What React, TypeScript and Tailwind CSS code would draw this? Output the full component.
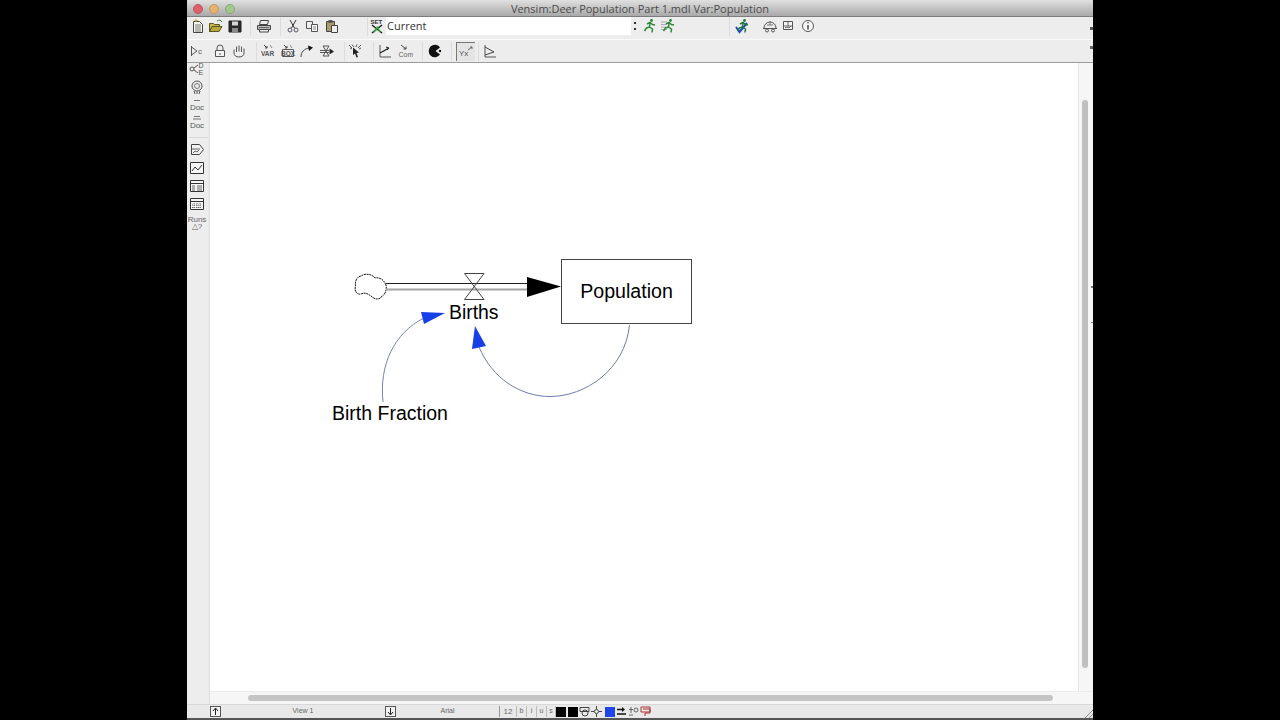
import type { ReactNode } from "react";

function Ic({ children, className = "" }: { children: ReactNode; className?: string }) {
  return (
    <svg viewBox="0 0 16 16" className={`w-4 h-4 shrink-0 ${className}`} fill="none" stroke="#444" strokeWidth="1">
      {children}
    </svg>
  );
}

function Sep({ className = "" }: { className?: string }) {
  return <div className={`w-px h-[19px] bg-[#dcdcdc] shrink-0 ${className}`} />;
}

const NewDoc = ({ className }: { className?: string }) => (
  <Ic className={className}>
    <path d="M3.500 3.500h6l3 3v8h-9z" fill="#f7f7f0" />
    <path d="M5 7h6M5 9h6M5 11h6M5 13h6" stroke="#777" />
    <path d="M6 1v3M4.500 2.500h3" stroke="#b9a93a" />
  </Ic>
);
const OpenDoc = ({ className }: { className?: string }) => (
  <Ic className={className}>
    <path d="M1.500 5.500h4l1 1h5v2h-7l-3 5z" fill="#c9b64a" stroke="#5b5720" />
    <path d="M1.500 13.500l2.500-5h10l-3 5z" fill="#b8a63e" stroke="#5b5720" />
    <path d="M9 3c2-1.500 4-1 5 1" stroke="#3f7f3f" />
  </Ic>
);
const Save = ({ className }: { className?: string }) => (
  <Ic className={className}>
    <path d="M2 3h12v11H2z" fill="#2b2b2b" stroke="#222" />
    <path d="M5 3.500h6v4H5z" fill="#d6d6d6" stroke="none" />
    <path d="M5 10h6v4H5z" fill="#8a8a8a" stroke="none" />
  </Ic>
);
const Printer = ({ className }: { className?: string }) => (
  <Ic className={className}>
    <path d="M4.500 2.500h8l-1 4h-8z" fill="#eee" />
    <path d="M1.500 7.500h13v4h-13z" fill="#bbb" />
    <path d="M3.500 11.500h9v2.500h-9z" fill="#eee" />
    <path d="M3 9.500h10" stroke="#666" />
  </Ic>
);
const Scissors = ({ className }: { className?: string }) => (
  <Ic className={className}>
    <path d="M5 2l4.500 8M11 2l-4.500 8" stroke="#333" />
    <circle cx="5" cy="12" r="2" stroke="#556" />
    <circle cx="11" cy="12" r="2" stroke="#556" />
  </Ic>
);
const Copy = ({ className }: { className?: string }) => (
  <Ic className={className}>
    <path d="M2.500 3.500h6v7h-6z" fill="#eee" stroke="#555" />
    <path d="M7.500 6.500h6v7h-6z" fill="#f6f6f6" stroke="#555" />
    <path d="M9 9h3M9 11h3" stroke="#888" />
  </Ic>
);
const Paste = ({ className }: { className?: string }) => (
  <Ic className={className}>
    <path d="M2.500 3.500h8v10h-8z" fill="#a99b6c" stroke="#444" />
    <path d="M4.500 2h4v3h-4z" fill="#555" stroke="none" />
    <path d="M7.500 7.500h6v7h-6z" fill="#eee" stroke="#444" />
  </Ic>
);
const SetIcon = ({ className }: { className?: string }) => (
  <Ic className={className}>
    <text x="1.500" y="6" fontSize="6" fontWeight="700" fontFamily="Liberation Sans" fill="#333" stroke="none">SET</text>
    <path d="M3 7l10 8M13 7L3 15" stroke="#1f1f1f" strokeWidth="1.500" />
    <path d="M8 8.500l3 5.500M5 14l3-4" stroke="#2faa3f" strokeWidth="1.500" />
  </Ic>
);
const Runner = ({ className, color = "#2c8a35", check = false, lines = false }: { className?: string; color?: string; check?: boolean; lines?: boolean }) => (
  <Ic className={className}>
    {lines && <path d="M1 4h6M1 6.500h5M1 9h5M1 11.500h6" stroke="#aaa" />}
    {check && <path d="M2 9l3.500 5L13 5" stroke="#2446c9" strokeWidth="2" />}
    <circle cx="10.500" cy="2.500" r="1.400" fill={color} stroke="none" />
    <path d="M6 6l3-1.500 2.500 2 2.500.5M9 5l-.5 4-3 1-2 3M8.500 9l3 2-.500 3.500" stroke={color} strokeWidth="1.500" />
  </Ic>
);
const Sketch = ({ className }: { className?: string }) => (
  <Ic className={className}>
    <path d="M2 10a6 6 0 0 1 12 0M1 10.500h14" stroke="#555" />
    <path d="M5 7h6M8 3v4" stroke="#777" />
    <circle cx="5" cy="12.500" r="1.500" stroke="#555" />
    <circle cx="11" cy="12.500" r="1.500" stroke="#555" />
  </Ic>
);
const Chart = ({ className }: { className?: string }) => (
  <Ic className={className}>
    <path d="M3.500 3.500h9v8h-9z" fill="#f4f4f4" stroke="#555" />
    <path d="M4 8h8M8 4v4M5 10l2-1 2 1 2-2" stroke="#666" />
  </Ic>
);
const Info = ({ className }: { className?: string }) => (
  <Ic className={className}>
    <circle cx="8" cy="8" r="5.500" fill="#f8f8f8" stroke="#555" />
    <path d="M8 7v4.500" stroke="#444" strokeWidth="1.500" />
    <circle cx="8" cy="4.800" r=".8" fill="#444" stroke="none" />
  </Ic>
);
const FlagC = ({ className }: { className?: string }) => (
  <Ic className={className}>
    <path d="M2.500 3v10M2.500 4L8 8l-5.500 4" stroke="#555" />
    <text x="9" y="11" fontSize="8" fontFamily="Liberation Sans" fill="#555" stroke="none">c</text>
  </Ic>
);
const CauseDE = ({ className }: { className?: string }) => (
  <Ic className={className}>
    <circle cx="3" cy="8" r="2" stroke="#555" />
    <path d="M5 7l4-3M5 9l4 3" stroke="#555" />
    <text x="9.500" y="6.500" fontSize="7" fontFamily="Liberation Sans" fill="#555" stroke="none">D</text>
    <text x="9.500" y="14" fontSize="7" fontFamily="Liberation Sans" fill="#555" stroke="none">E</text>
  </Ic>
);
const Lock = ({ className }: { className?: string }) => (
  <Ic className={className}>
    <path d="M5 7V5a3 3 0 0 1 6 0v2" stroke="#555" />
    <path d="M3.500 7.500h9v6h-9z" fill="#f4f4f4" stroke="#555" />
    <path d="M8 10v2" stroke="#555" />
  </Ic>
);
const Hand = ({ className }: { className?: string }) => (
  <Ic className={className}>
    <path d="M3 6.500V10c0 2.500 2 4 5 4s5-1.500 5-4V5.500M5.500 9V3.500M8 8.500V2.500M10.500 9V3.500" stroke="#555" />
  </Ic>
);
const VarIcon = ({ className, box = false }: { className?: string; box?: boolean }) => (
  <Ic className={className}>
    {box && <path d="M2.500 6.500h11v7h-11z" stroke="#555" />}
    <path d="M4 2l3 3M7 5V3M7 5H5" stroke="#444" />
    <path d="M10 2l2 3" stroke="#888" />
    <text x="1" y="13" fontSize="6.500" fontWeight="700" fontFamily="Liberation Sans" fill="#555" stroke="none">{box ? "BOX" : "VAR"}</text>
  </Ic>
);
const CurveArrow = ({ className }: { className?: string }) => (
  <Ic className={className}>
    <path d="M2 14C2 9 5 6 10 5" stroke="#444" />
    <path d="M9 2.500l5 2-4 3.500z" fill="#111" stroke="none" />
  </Ic>
);
const Valve = ({ className }: { className?: string }) => (
  <Ic className={className}>
    <path d="M4 3h6l-6 10h6zM1 7.500h9M1 9.500h9" stroke="#555" />
    <path d="M10.500 5.500l4.500 3-4.500 3z" fill="#222" stroke="none" />
  </Ic>
);
const Antenna = ({ className }: { className?: string }) => (
  <Ic className={className}>
    <path d="M1 2l3 3M4 1.500L6 4M9 1.500L8 4M13 2l-3 3M2 5l2 1M13 5l-2 1" stroke="#555" />
    <path d="M5 4.500l6 5-2.500.5 1.500 4-1.500.5-1.500-4-2 1.500z" fill="#222" stroke="none" />
  </Ic>
);
const Graph = ({ className }: { className?: string }) => (
  <Ic className={className}>
    <path d="M3 2v12h11" stroke="#555" />
    <path d="M3 10l9-5" stroke="#222" strokeWidth="1.300" />
    <path d="M9 4l3 1-2 2" stroke="#222" />
  </Ic>
);
const ComIcon = ({ className }: { className?: string }) => (
  <Ic className={className}>
    <path d="M4 2l5 4M9 6V3.500M9 6H6.500" stroke="#444" />
    <text x="1.500" y="14" fontSize="7" fontFamily="Liberation Sans" fill="#666" stroke="none">Com</text>
  </Ic>
);
const Pacman = ({ className }: { className?: string }) => (
  <Ic className={className}>
    <path d="M14 4.500A6.200 6.200 0 1 0 14 11.500L9.500 8z" fill="#111" stroke="none" />
    <circle cx="14" cy="8" r="1.200" fill="#111" stroke="none" />
  </Ic>
);
const YxIcon = () => (
  <Ic>
    <text x="1" y="12" fontSize="8" fontFamily="Liberation Sans" fill="#555" stroke="none">Yx</text>
    <path d="M10 6l4-3M12 3h2v2" stroke="#666" />
  </Ic>
);
const TriGraph = ({ className }: { className?: string }) => (
  <Ic className={className}>
    <path d="M3 2v12h11" stroke="#555" />
    <path d="M3 4l9 5-9 3" stroke="#444" />
  </Ic>
);
const TinyDoc = ({ className, mark }: { className?: string; mark: string }) => (
  <div className={`w-4 h-4 shrink-0 flex flex-col items-center justify-end text-[8px] leading-[9px] text-[#555] ${className ?? ""}`}>
    <svg viewBox="0 0 16 6" className="w-4 h-[6px]" stroke="#777" fill="none">
      <path d={mark} />
    </svg>
    <span>Doc</span>
  </div>
);
const ViewerBox = ({ className }: { className?: string }) => (
  <Ic className={className}>
    <path d="M2.500 2.500h8l4 5-4 5h-8z" fill="#f2f2f2" stroke="#444" />
    <path d="M3 7h8M4 11l2-2 2 1 2-2" stroke="#666" />
  </Ic>
);
const LineGraph = ({ className }: { className?: string }) => (
  <Ic className={className}>
    <path d="M1.500 2.500h13v11h-13z" fill="#f6f6f6" stroke="#333" />
    <path d="M3 11l3-4 3 3 4-5" stroke="#333" />
  </Ic>
);
const TableIcon = ({ className, dense = false }: { className?: string; dense?: boolean }) => (
  <Ic className={className}>
    <path d="M1.500 2.500h13v11h-13z" fill="#f6f6f6" stroke="#333" />
    <path d="M2 5.500h12" stroke="#333" />
    <path d={dense ? "M5 7v6M8 7v6M11 7v6M3 9h10M3 11.500h10" : "M3 8h3M8 8h5M3 10h3M8 10h5M3 12h3M8 12h5"} stroke="#666" strokeDasharray={dense ? "1 1" : undefined} />
  </Ic>
);
const StatusBtn = ({ down = false }: { down?: boolean }) => (
  <div className="w-[11px] h-[11px] border border-[#555] bg-[#f2f2f2] flex items-center justify-center shrink-0">
    <svg viewBox="0 0 9 9" className="w-[9px] h-[9px]" stroke="#222" fill="none">
      <path d={down ? "M4.500 1v6M2 5l2.500 3L7 5" : "M4.500 8V2M2 4l2.500-3L7 4"} />
    </svg>
  </div>
);
const MiniIcon = ({ children }: { children: ReactNode }) => (
  <svg viewBox="0 0 11 11" className="w-[11px] h-[11px] shrink-0" fill="none" stroke="#444">
    {children}
  </svg>
);

function Diagram() {
  return (
    <div className="relative flex-1 bg-white overflow-hidden">
      <svg viewBox="210 63 868 630" className="absolute left-0 top-0 w-[868px] h-[630px]" fill="none">
        <path
          d="M386 285C384 280 380 277 375 278C372 274 365 273 361 276C356 277 355 282 355.500 286C354 291 357 295 361 294C365 292 368 294 371 296C375 300 380 300 382 296C385 295 387 290 386 285Z"
          stroke="#111"
          strokeWidth="1"
          strokeDasharray="2 .7"
        />
        <path d="M386 283.500H527" stroke="#222" strokeWidth="1.200" />
        <path d="M386 289.500H527" stroke="#a4a4a4" strokeWidth="2" />
        <path d="M527 277L561 286.500L527 297Z" fill="#000" />
        <path d="M464.500 273.500H484L464.500 299.500H484Z" stroke="#444" strokeWidth="1" />
        <path d="M383 402C379 365 394 333 424 318" stroke="#7482ad" strokeWidth="1" />
        <path d="M421 312L445 313L424 324Z" fill="#1740e6" />
        <path d="M629.500 325C625 370 585 396.500 550 396.500C520 396.500 492 378 479 347" stroke="#6f7dab" strokeWidth="1" />
        <path d="M475 326L486 346L472 349Z" fill="#1740e6" />
      </svg>
      {/* population stock */}
      <div className="absolute left-[351px] top-[196px] w-[131px] h-[65px] border border-[#444] bg-white flex items-center justify-center text-[19.6px] text-black">
        Population
      </div>
      <span className="absolute left-[239px] top-[237px] text-[19.4px] leading-6 text-black">Births</span>
      <span className="absolute left-[122px] top-[338px] text-[19.5px] leading-6 text-black">Birth Fraction</span>
    </div>
  );
}

export default function App() {
  return (
    <div className="h-screen bg-black flex justify-center overflow-hidden font-['Liberation_Sans',sans-serif]">
      <div className="w-[906px] h-[720px] flex flex-col bg-[#ededed] relative">
        {/* title bar */}
        <div className="h-[17px] shrink-0 relative flex items-center justify-center bg-gradient-to-b from-[#e0e0e0] to-[#a9a9a9] border-b border-[#7c7c7c]">
          <div className="absolute left-[6px] top-[4px] flex gap-[6px]">
            <div className="w-[10px] h-[10px] rounded-full bg-[#df5f66] border border-[#b9585c]" />
            <div className="w-[10px] h-[10px] rounded-full bg-[#e6b36e] border border-[#c2995f]" />
            <div className="w-[10px] h-[10px] rounded-full bg-[#a3c78c] border border-[#86a875]" />
          </div>
          <span className="font-['Open_Sans',sans-serif] text-[11px] leading-none text-[#4a4a4a]">
            Vensim:Deer Population Part 1.mdl Var:Population
          </span>
        </div>

        {/* main toolbar */}
        <div className="h-[23px] shrink-0 flex items-center pl-[3px] pb-[4px] border-b border-[#fafafa] bg-[#ededed]">
          <NewDoc />
          <OpenDoc className="ml-[2px]" />
          <Save className="ml-[3px]" />
          <Sep className="ml-[7px]" />
          <Printer className="ml-[5px]" />
          <Sep className="ml-[8px]" />
          <Scissors className="ml-[4px]" />
          <Copy className="ml-[3px]" />
          <Paste className="ml-[4px]" />
          <Sep className="ml-[27px]" />
          <SetIcon className="ml-[1px]" />
          <div className="ml-[1px] w-[245px] h-[18px] bg-white flex items-center pl-[1px] text-[11px] font-['Open_Sans',sans-serif] text-[#333] shrink-0">
            Current
          </div>
          <div className="ml-[3px] w-[2px] h-[8px] border-y-2 border-[#333] shrink-0" />
          <Runner className="ml-[5px]" />
          <Runner className="ml-[3px]" lines />
          <Sep className="ml-[53px]" />
          <Runner className="ml-[4px]" color="#1f7a3a" check />
          <Sketch className="ml-[12px]" />
          <Chart className="ml-[2px]" />
          <Info className="ml-[4px]" />
        </div>

        {/* sketch toolbar */}
        <div className="h-[23px] shrink-0 flex items-center pl-[2px] border-b border-[#9c9c9c] bg-[#ededed]">
          <FlagC />
          <Lock className="ml-[7px]" />
          <Hand className="ml-[3px]" />
          <Sep className="ml-[9px]" />
          <VarIcon className="ml-[3px]" />
          <VarIcon className="ml-[4px]" box />
          <CurveArrow className="ml-[3px]" />
          <Valve className="ml-[4px]" />
          <Sep className="ml-[9px]" />
          <Antenna className="ml-[3px]" />
          <Sep className="ml-[9px]" />
          <Graph className="ml-[3px]" />
          <ComIcon className="ml-[4px]" />
          <Sep className="ml-[9px]" />
          <Pacman className="ml-[3px]" />
          <Sep className="ml-[9px]" />
          <div className="ml-[4px] w-[19px] h-[19px] flex items-center justify-center border-l border-t border-[#777] bg-[#e4e4e4] shrink-0">
            <YxIcon />
          </div>
          <Sep className="ml-[3px]" />
          <TriGraph className="ml-[3px]" />
        </div>

        {/* body */}
        <div className="flex-1 min-h-0 flex">
          <div className="w-[23px] shrink-0 flex flex-col pl-[2px] border-r border-[#dcdcdc]">
            <CauseDE className="mt-[-2px]" />
            <Ic className="mt-[2px]">
              <circle cx="8" cy="7" r="5" stroke="#555" />
              <circle cx="8" cy="7" r="2.500" stroke="#777" />
              <path d="M5 12l1 3M8 12v3M11 12l-1 3" stroke="#555" />
            </Ic>
            <TinyDoc className="mt-[1px]" mark="M5 3.500h6" />
            <TinyDoc className="mt-[2px]" mark="M5 1.500h6M4 4h8" />
            <div className="w-[19px] h-px bg-[#d8d8d8] mt-[7px]" />
            <ViewerBox className="mt-[4px]" />
            <LineGraph className="mt-[2px]" />
            <TableIcon className="mt-[2px]" />
            <TableIcon className="mt-[2px]" dense />
            <div className="mt-[4px] w-4 flex flex-col items-center text-[8px] leading-[7px] text-[#666]">
              <span>Runs</span>
              <span>△?</span>
            </div>
          </div>

          <div className="flex-1 min-w-0 flex flex-col bg-[#f6f6f6]">
            <div className="flex-1 min-h-0 flex">
              <Diagram />
              <div className="w-[15px] shrink-0 pl-[3px] pr-[5px] pt-[37px] pb-[23px] border-l border-[#e6e6e6]">
                <div className="h-full rounded-full bg-[#c0c0c0]" />
              </div>
            </div>
            <div className="h-[13px] shrink-0 pl-[38px] pr-[40px] py-[3px] border-t border-[#ececec]">
              <div className="h-full rounded-full bg-[#c4c4c4]" />
            </div>
          </div>
        </div>

        {/* status bar */}
        <div className="h-[14px] shrink-0 border-t border-[#d8d8d8] bg-[#e9e9e9] flex items-center pl-[23px] text-[7px] text-[#666] relative">
          <StatusBtn />
          <div className="w-[164px] text-center shrink-0">View 1</div>
          <StatusBtn down />
          <div className="w-[103px] text-center shrink-0">Arial</div>
          <div className="w-px h-[11px] bg-[#999] shrink-0" />
          <div className="w-[16px] text-center shrink-0 text-[8px]">12</div>
          <div className="w-[10px] text-center shrink-0 border-l border-[#bbb]">b</div>
          <div className="w-[10px] text-center shrink-0 border-l border-[#bbb]">i</div>
          <div className="w-[10px] text-center shrink-0 border-l border-[#bbb]">u</div>
          <div className="w-[10px] text-center shrink-0 border-x border-[#bbb]">s</div>
          <div className="w-[10px] h-[10px] bg-black shrink-0" />
          <div className="w-[10px] h-[10px] bg-black shrink-0 ml-[2px]" />
          <div className="ml-[1px]">
            <MiniIcon>
              <path d="M1 1.500h9v4h-9z" />
              <circle cx="6" cy="7" r="3" />
            </MiniIcon>
          </div>
          <div className="ml-[1px]">
            <MiniIcon>
              <circle cx="5.500" cy="5.500" r="2" />
              <path d="M5.500 0v3M5.500 8v3M0 5.500h3M8 5.500h3" />
            </MiniIcon>
          </div>
          <div className="w-[10px] h-[10px] bg-[#1f45e8] shrink-0 ml-[3px]" />
          <div className="ml-[1px]">
            <MiniIcon>
              <path d="M1 3.500h6M1 8h9" stroke="#111" strokeWidth="1.500" />
              <path d="M6 1l3 2.500L6 6" fill="#111" stroke="none" />
            </MiniIcon>
          </div>
          <div className="ml-[1px]">
            <MiniIcon>
              <path d="M3 1v6M1 3.500h4M1 9h4" stroke="#666" />
              <circle cx="8" cy="4" r="2" stroke="#666" />
            </MiniIcon>
          </div>
          <div className="ml-[1px]">
            <MiniIcon>
              <path d="M1 1h9v5H1z" stroke="#a33" />
              <path d="M3 3h7v4H5v3" stroke="#a33" />
            </MiniIcon>
          </div>
        </div>
        <div className="h-[2px] shrink-0 bg-[#555]" />

        {/* clipped toolbar glyphs and grips at the right edge */}
        <div className="absolute right-0 top-[27px] w-[3px] h-[3px] bg-[#555]" />
        <div className="absolute right-0 top-[46px] w-[3px] h-[3px] bg-[#666]" />
        <div className="absolute right-0 top-[286px] w-[2px] h-[2px] bg-[#777]" />
        <div className="absolute right-0 top-[322px] w-[2px] h-px bg-[#777]" />
        <svg viewBox="0 0 8 8" className="absolute right-0 bottom-[2px] w-2 h-2" stroke="#888" fill="none">
          <path d="M0 8l8-8M4 8l4-4" />
        </svg>
      </div>
    </div>
  );
}
